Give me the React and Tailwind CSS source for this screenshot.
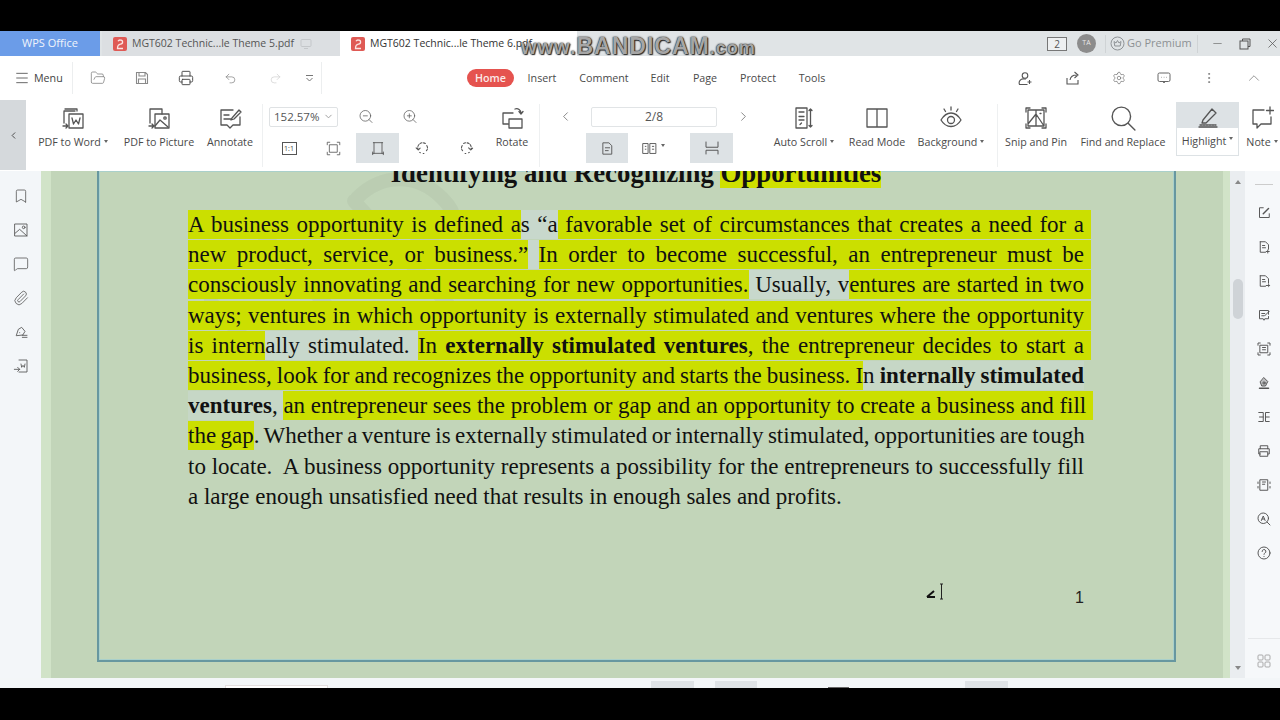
import React from "react";
import {
  Menu, FolderOpen, Undo2, Redo2, ZoomIn, ZoomOut, ChevronLeft, ChevronRight, ChevronDown, ChevronUp,
  Bookmark, MessageSquare, Paperclip, Settings, EllipsisVertical, Minus, X, Printer,
} from "lucide-react";

const sans = "font-['Open_Sans','Liberation_Sans',sans-serif]";

// small wrapper for the hand drawn toolbar icons
function Ico({ size = 24, box = 24, sw = 1.3, className = "text-[#555]", children }) {
  return (
    <svg width={size} height={size} viewBox={`0 0 ${box} ${box}`} fill="none" stroke="currentColor" strokeWidth={sw} strokeLinecap="round" strokeLinejoin="round" className={className}>
      {children}
    </svg>
  );
}

function Caret() {
  return <span className="ml-[3px] inline-block h-0 w-0 -translate-y-[3px] border-x-[2.5px] border-t-[3px] border-x-transparent border-t-[#666]" />;
}

function PdfBadge() {
  return (
    <svg width="14" height="14" viewBox="0 0 14 14" fill="none" className="mr-[5px] shrink-0">
      <rect width="14" height="14" rx="2" fill="#df5a55" />
      <path d="M5 4.200a2.300 2.300 0 0 1 2.300-1.200c3 0 3 3.800.2 4.200C5 7.600 4.500 10 4.500 11.500H10" stroke="#fbe4e2" strokeWidth="1.300" />
    </svg>
  );
}

function BigBtn({ className, icon, label, caret }) {
  return (
    <div className={`flex shrink-0 flex-col items-center pt-[6px] ${className}`}>
      <div className="flex h-[24px] items-center justify-center">{icon}</div>
      <div className="mt-[4px] whitespace-nowrap text-[10.7px] leading-[16px] text-[#4a4a4a]">
        {label}
        {caret && <Caret />}
      </div>
    </div>
  );
}

const tabs = [
  ["Insert", "w-[56px]"],
  ["Comment", "w-[68px]"],
  ["Edit", "w-[44px]"],
  ["Page", "w-[46px]"],
  ["Protect", "w-[60px]"],
  ["Tools", "w-[48px]"],
];

// h = highlighted, e = highlighted to the line end, s = grey selection tint, t = faint tint
const lines = [
  { segs: [["A business opportunity is defined a", "h"], ["s “a", "s"], [" favorable set of circumstances that creates a need for a", "e"]] },
  { segs: [["new product, service, or business.”", "h"], [" ", "s"], ["In order to become successful, an entrepreneur must be", "e"]] },
  { segs: [["consciously innovating and searching for new opportunities.", "h"], [" Usually, v", "s"], ["entures are started in two", "e"]] },
  { segs: [["ways; ventures in which opportunity is externally stimulated and ventures where the opportunity", "e"]] },
  { segs: [["is intern", "h"], ["ally stimulated. ", "s"], ["In ", "h"], ["externally stimulated ventures", "h", "b"], [", the entrepreneur decides to start a", "e"]] },
  { tight: "[word-spacing:-0.8px]", segs: [["business, look for and recognizes the opportunity and starts the business. I", "h"], ["n ", "t"], ["internally stimulated", "t", "b"]] },
  { segs: [["ventures", "t", "b"], [", ", "t"], ["an entrepreneur sees the problem or gap and an opportunity to create a business and fill", "e"]] },
  { tight: "[word-spacing:-1.3px]", segs: [["the gap", "h"], [". Whether a venture is externally stimulated or internally stimulated, opportunities are tough", null]] },
  { segs: [["to locate.  A business opportunity represents a possibility for the entrepreneurs to successfully fill", null]] },
];

function Run({ seg }) {
  const [text, kind, bold] = seg;
  let cls = "";
  if (kind === "h") cls = "bg-[#cbdf00] py-[2px]";
  if (kind === "e") cls = "bg-[#cbdf00] py-[2px] pr-[7px] -mr-[7px]";
  if (kind === "s") cls = "bg-[#c8d8cc] py-[2px]";
  if (kind === "t") cls = "bg-[#c6d7c6] py-[2px]";
  if (bold) cls += " font-bold";
  return <span className={cls}>{text}</span>;
}

const rightIcons = [
  <><path d="M11 5H6v13h13v-5" /><path d="M11 13l7-7" strokeWidth="2" /></>,
  <><path d="M7 5h7l4 4v6M7 5v14h7M10 10h3M10 13h4M17 16v4M15 18h4" /></>,
  <><path d="M7 5h7l4 4v6M7 5v14h7M10 10h3M10 13h4M15 18h4M18 16.500l1.500 1.500-1.500 1.500" /></>,
  <><path d="M18 11V6H6v11h5l1 2 1-2h5v-3M9 10h4M9 13h3M13 13l6-6" /></>,
  <><path d="M7 7h10v10H7zM10 10h4M10 13h4M4 7V4h3M17 4h3v3M20 17v3h-3M7 20H4v-3" /></>,
  <><path d="M12 5l5 5-3 6H9l-2-5z" fill="currentColor" fillOpacity=".35" /><circle cx="12" cy="12" r="1.500" /><path d="M6 19h12" strokeWidth="2" /></>,
  <><path d="M5 6h6v12H5M11 12H6M19 6h-5v12h5M14 12h5" /></>,
  <><path d="M7 9V5h10v4M7 16H5V9h14v7h-2M7 13h10v6H7z" /></>,
  <><path d="M7 5h10v14H7zM10 8h4M10 11h3M4 8v2M4 14v2M20 8v2M20 14v2" /></>,
  <><circle cx="11" cy="11" r="7" /><path d="M8.500 14l2.500-6 2.500 6M9.500 12h3M16 16l4 4" /></>,
  <><circle cx="12" cy="12" r="8" /><path d="M9.500 10a2.500 2.500 0 1 1 3.500 2.200c-.7.4-1 .8-1 1.600M12 16.500v.2" /></>,
];

export default function App() {
  return (
    <div className={`flex h-[720px] w-[1280px] flex-col overflow-hidden bg-black ${sans} relative`}>
      <div className="h-[31px] shrink-0" />

      {/* title bar */}
      <div className="flex h-[25px] shrink-0 items-center bg-[#e0e4e6] text-[10.5px]">
        <div className="flex h-full w-[100px] items-center justify-center bg-[#6b9ce8] text-[11px] text-[#f0f4fb]">WPS Office</div>
        <div className="ml-[2px] flex h-full w-[238px] items-center bg-[#dcdfe2] pl-[11px] text-[#555]">
          <PdfBadge />
          MGT602 Technic...le Theme 5.pdf
          <svg width="12" height="12" viewBox="0 0 12 12" fill="none" stroke="#c4c7ca" className="ml-[6px]"><rect x="1" y="1.500" width="10" height="7" rx="1" /><path d="M4 10.500h4" /></svg>
        </div>
        <div className="flex h-full w-[237px] items-center bg-white pl-[11px] text-[#333]">
          <PdfBadge />
          MGT602 Technic...le Theme 6.pdf
        </div>
        <div className="ml-auto flex h-full items-center">
          <div className="relative flex h-[14px] w-[20px] items-center justify-center border border-[#777] bg-[#eef0f1] text-[10px] leading-none text-[#555]">2</div>
          <div className="ml-[10px] flex h-[19px] w-[19px] items-center justify-center rounded-full bg-[#8c8c8c] text-[7px] text-[#e8e8e8]">TA</div>
          <div className="ml-[9px] h-[18px] w-px bg-[#cfd3d5]" />
          <svg width="15" height="15" viewBox="0 0 15 15" fill="none" stroke="#8f9396" className="ml-[4px]"><circle cx="7.500" cy="7.500" r="6.500" /><path d="M4 5.500l2 1.500 1.500-2.500L9 7l2-1.500-.8 4.500H4.800z" /></svg>
          <span className="w-[72px] pl-[2px] text-[11px] text-[#8d9194]">Go Premium</span>
          <div className="h-[18px] w-px bg-[#cfd3d5]" />
          <Minus size={13} strokeWidth={1.2} className="ml-[13px] text-[#666]" />
          <svg width="12" height="12" viewBox="0 0 12 12" fill="none" stroke="#555" className="ml-[15px]"><rect x="1" y="3" width="8" height="8" /><path d="M3.500 3V1H11v7.500H9" /></svg>
          <X size={15} strokeWidth={1.2} className="ml-[14px] text-[#555]" />
        </div>
      </div>

      {/* menu row */}
      <div className="flex h-[44px] shrink-0 items-center bg-white text-[#444]">
        <Menu size={16} strokeWidth={1.2} className="ml-[14px] text-[#444]" />
        <span className="ml-[4px] w-[30px] text-[10.7px]">Menu</span>
        <div className="ml-[8px] h-[32px] w-px bg-[#eceeef]" />
        <div className="ml-[17px] flex w-[16px] justify-center"><FolderOpen size={16} strokeWidth={1.1} className="text-[#777]" /></div>
        <svg width="14" height="14" viewBox="0 0 14 14" fill="none" stroke="#8a8a8a" strokeWidth="1.100" className="ml-[29px]"><path d="M1.500 1.500h9l2 2v9h-11zM4 1.500v3.500h6V1.500M3.500 12.500V8h7v4.500" /></svg>
        <Printer size={16} strokeWidth={1.4} className="ml-[29px] text-[#444]" />
        <Undo2 size={13} strokeWidth={1.2} className="ml-[30px] text-[#777]" />
        <Redo2 size={13} strokeWidth={1.2} className="ml-[32px] text-[#ccc]" />
        <svg width="9" height="9" viewBox="0 0 9 9" fill="none" stroke="#777" className="ml-[23px]"><path d="M1 1.500h7M1.500 4l3 3 3-3" /></svg>
        <div className="ml-[7px] h-[32px] w-px bg-[#eceeef]" />
        <div className="ml-[145px] flex h-[18px] w-[47px] items-center justify-center rounded-full bg-[#e5534f] text-[10.7px] font-semibold text-[#fbe9e8]">Home</div>
        {tabs.map(([t, w]) => (
          <div key={t} className={`${w} shrink-0 text-center text-[10.7px] text-[#4a4a4a]`}>{t}</div>
        ))}
        <div className="ml-auto flex items-center text-[#666]">
          <svg width="15" height="15" viewBox="0 0 15 15" fill="none" stroke="#555" strokeWidth="1.100"><circle cx="7" cy="4.500" r="2.800" /><path d="M8 8H6a4 4 0 0 0-4.500 5.500h8M11.500 9v4M9.500 11h4" /></svg>
          <svg width="16" height="16" viewBox="0 0 16 16" fill="none" stroke="#555" strokeWidth="1.100" className="ml-[32px]"><path d="M2 8v6h11v-4M5 10c.5-3 3-5 6.500-5M9.500 2l3.500 3-3.500 3" /></svg>
          <Settings size={14} strokeWidth={1.1} className="ml-[31px] text-[#666]" />
          <svg width="14" height="14" viewBox="0 0 14 14" fill="none" stroke="#666" className="ml-[31px]"><rect x="1" y="2" width="12" height="8.500" rx="1.500" /><path d="M6 10.500l1 1.500 1-1.500M4.500 6.300h.5M6.800 6.300h.5M9 6.300h.5" /></svg>
          <EllipsisVertical size={14} strokeWidth={1.4} className="ml-[31px] text-[#777]" />
          <ChevronUp size={18} strokeWidth={1} className="ml-[29px] mr-[17px] text-[#777]" />
        </div>
      </div>

      {/* ribbon */}
      <div className="flex h-[71px] shrink-0 bg-white">
        <div className="flex h-[70px] w-[26px] shrink-0 items-center justify-center bg-[#d5d9dc]"><ChevronLeft size={11} strokeWidth={2} className="text-[#444]" /></div>
        <BigBtn className="w-[94px]" label="PDF to Word" caret icon={
          <Ico><path d="M3 17V5h11M4 3h12v2" /><rect x="8" y="8" width="14" height="14" /><path d="M11 12l1.500 6 2.500-4 2.500 4 1.500-6M2 20h5M5 18l2 2-2 2" /></Ico>} />
        <BigBtn className="w-[78px]" label="PDF to Picture" icon={
          <Ico><path d="M3 17V3h12v5" /><rect x="8" y="8" width="14" height="14" /><circle cx="18" cy="12" r="1.200" /><path d="M8 20l5-6 8 7M2 20h5M5 18l2 2-2 2" /></Ico>} />
        <BigBtn className="w-[64px]" label="Annotate" icon={
          <Ico><path d="M15 4H3v15h6l3 3 3-3h7V11M6 9h5M6 13h7M14 12l7-8 2 2-7 7-3 1z" /></Ico>} />
        <div className="my-[4px] w-px shrink-0 bg-[#eef0f1]" />

        {/* zoom and rotate group */}
        <div className="flex w-[224px] shrink-0 flex-col">
          <div className="flex h-[33px] items-center pl-[6px]">
            <div className="flex h-[20px] w-[69px] items-center justify-between rounded-[2px] border border-[#dfe2e4] pl-[4px] pr-[3px] text-[11.5px] text-[#555]">
              152.57%<ChevronDown size={11} className="text-[#999]" />
            </div>
            <div className="ml-[20px] flex w-[16px] justify-center"><ZoomOut size={17} strokeWidth={1.1} className="text-[#555]" /></div>
            <div className="ml-[28px] flex w-[16px] justify-center"><ZoomIn size={17} strokeWidth={1.1} className="text-[#555]" /></div>
          </div>
          <div className="flex h-[30px] items-center pl-[4px]">
            <div className="flex w-[44px] justify-center"><div className="flex h-[13px] w-[15px] items-center justify-center border border-[#555] text-[7px] leading-none text-[#444]">1:1</div></div>
            <div className="flex w-[45px] justify-center"><Ico size={15}><path d="M6 6h12v12H6zM2 6V2h4M18 2h4v4M22 18v4h-4M6 22H2v-4" /></Ico></div>
            <div className="flex h-[30px] w-[43px] items-center justify-center bg-[#dde2e5]"><Ico size={16}><path d="M5 4h14M6 4v16M18 4v16M4 20h16M4 18v4M20 18v4" /></Ico></div>
            <div className="flex w-[46px] justify-center"><Ico size={17} sw={1.5}><path d="M6 14a7 7 0 0 1 10-9M18 8c1.500 2 1.500 5-.5 7M14 19h-1M9 18l-1-.5M3 11l3 3 3-3" strokeDasharray="3 2" /></Ico></div>
            <div className="flex w-[42px] justify-center"><Ico size={17} sw={1.5}><path d="M8 5a7 7 0 0 1 10 9M6 8c-1.500 2-1.500 5 .5 7M10 19h1M15 18l1-.5M15 11l3 3 3-3" strokeDasharray="3 2" /></Ico></div>
          </div>
        </div>
        <BigBtn className="w-[50px]" label="Rotate" icon={
          <Ico><path d="M3 18V7h10M3 18h5M9 22V13h13v9zM15 3c3-1 6 1 6 4M19 5.500L21 8l2-2.500" /></Ico>} />
        <div className="my-[4px] ml-[2px] w-px shrink-0 bg-[#eef0f1]" />

        {/* page navigation */}
        <div className="flex w-[227px] shrink-0 flex-col">
          <div className="flex h-[33px] items-center">
            <div className="ml-[17px] flex w-[16px] justify-center"><ChevronLeft size={15} strokeWidth={1.1} className="text-[#555]" /></div>
            <div className="ml-[18px] flex h-[20px] w-[126px] items-center justify-center rounded-[2px] border border-[#e1e4e6] text-[12px] text-[#555]">2/8</div>
            <div className="ml-[18px] flex w-[16px] justify-center"><ChevronRight size={15} strokeWidth={1.1} className="text-[#555]" /></div>
          </div>
          <div className="flex h-[30px] items-center pl-[46px]">
            <div className="flex h-[30px] w-[42px] items-center justify-center bg-[#dde2e5]"><Ico size={17}><path d="M6 4h8l4 4v12H6zM9 11h6M9 15h4" /></Ico></div>
            <div className="flex w-[50px] items-center justify-center"><Ico size={17}><path d="M3 5h7v14H3zM13 5h8v14h-8zM6 9h1M6 13h1M16 9h2M16 13h2" /></Ico><Caret /></div>
            <div className="ml-[12px] flex h-[30px] w-[43px] items-center justify-center bg-[#dde2e5]"><Ico size={18}><path d="M4 4v7h16V4M4 20v-5h16v5" /></Ico></div>
          </div>
        </div>

        <BigBtn className="w-[74px]" label="Auto Scroll" caret icon={
          <Ico><path d="M4 2h11v20H4zM7 6h5M7 10.500h5M7 14h5M9.500 17l-1.500 1.500M18.500 3v18M17 4.500L18.500 3 20 4.500M17 19.500l1.500 1.500 1.500-1.500" /></Ico>} />
        <BigBtn className="w-[72px]" label="Read Mode" icon={
          <Ico><path d="M2 3h10v18H2zM12 3h10v18H12z" /></Ico>} />
        <BigBtn className="w-[76px]" label="Background" caret icon={
          <Ico><path d="M2 14c3-5 6.500-7 10-7s7 2 10 7c-3 5-6.500 6.500-10 6.500S5 19 2 14z" /><circle cx="12" cy="14" r="3.500" /><path d="M5 3l1.500 2.500M12 1v3M19 3l-1.500 2.500" /></Ico>} />
        <div className="my-[4px] ml-[8px] w-px shrink-0 bg-[#eef0f1]" />
        <BigBtn className="ml-[2px] w-[72px]" label="Snip and Pin" icon={
          <Ico><path d="M4 4h16v16H4zM4 18l8-10 8 12M16 7.500h1M2 6V2h4M18 2h4v4M22 18v4h-4M6 22H2v-4M12 4v16" /></Ico>} />
        <BigBtn className="w-[102px]" label="Find and Replace" icon={
          <Ico size={26}><circle cx="10.500" cy="10.500" r="8.500" /><path d="M17 17l6 6" /></Ico>} />
        <div className="relative ml-[2px] mt-[2px] h-[54px] w-[63px] shrink-0 bg-[#dde2e5]">
          <div className="flex h-[26px] items-center justify-center pt-[4px]">
            <Ico><path d="M7 15l9-11 4 4-10 10H6zM3 22h18" /><path d="M4 20h16" strokeDasharray="2 1" /></Ico>
          </div>
          <div className="mx-[1px] flex h-[27px] items-center justify-center bg-white text-[10.7px] text-[#4a4a4a]">Highlight<Caret /></div>
        </div>
        <BigBtn className="ml-[5px] w-[36px]" label="Note" caret icon={
          <Ico><path d="M14 4H3v14h4v4l4-4h10v-7M20 1v7M16.500 4.500h7" /></Ico>} />
      </div>

      {/* document area */}
      <div className="relative flex h-[507px] shrink-0 overflow-hidden">
        <div className="flex w-[41px] shrink-0 flex-col items-center gap-[18px] bg-[#f3f6f9] pt-[17px] text-[#555]">
          <Bookmark size={16} strokeWidth={1.2} />
          <Ico size={16}><path d="M3 3h18v18H3zM3 17l7-6 11 10" /><circle cx="16" cy="8" r="2" /></Ico>
          <MessageSquare size={16} strokeWidth={1.2} />
          <Paperclip size={16} strokeWidth={1.2} />
          <Ico size={16}><path d="M5 17l3-9 5-3 5 6-3 5zM10 13h.1M14 20h7M14 17h7" /></Ico>
          <Ico size={16}><path d="M9 3h12v18H9M12 9l1 5 2-3 2 3 1-5M2 17h8M7 14l3 3-3 3" /></Ico>
        </div>
        <div className="w-[10px] shrink-0 bg-[#d1e3c8]" />

        <div className="relative flex-1 overflow-hidden bg-[#c2d5b9] pl-[46px]">
          <div className="relative h-[491px] w-[1079px] border-2 border-t-0 border-[#6797a0] text-[#111] shadow-[inset_0_0_0_1px_#a9d0cb]">
            {/* faint watermark */}
            <svg width="320" height="230" viewBox="0 0 320 230" fill="none" stroke="#000" strokeOpacity=".035" strokeWidth="14" strokeLinecap="round" className="absolute left-[105px] top-0">
              <path d="M3 127l72 78M60 65l90 100M150 30l100 110M153 27c25-25 60-25 85 0s5 35-25 40" />
            </svg>
            <div className="relative flex flex-col pl-[89px] pr-[90px] font-['Liberation_Serif',serif] text-[23px]">
              <div className="-mt-[14px] h-[53px] text-center text-[26.8px] font-bold leading-[32px]">
                Identifying and Recognizing <span className="bg-[#cfe000]">Opportunities</span>
              </div>
              {lines.map((line, i) => (
                <div key={i} className={`h-[30.2px] whitespace-pre leading-[30.2px] [text-align-last:justify] ${line.tight || ""}`}>
                  {line.segs.map((s, j) => <Run key={j} seg={s} />)}
                </div>
              ))}
              <div className="h-[30.2px] whitespace-pre leading-[30.2px]">a large enough unsatisfied need that results in enough sales and profits.</div>
              <div className="mt-[74px] text-right font-['Liberation_Sans',sans-serif] text-[16px] leading-[24px] text-[#222]">1</div>
            </div>
            {/* mouse cursor with the pen tip */}
            <svg width="20" height="20" viewBox="0 0 20 20" fill="none" className="absolute left-[827px] top-[411px]">
              <path d="M1 15l7-6M1 15h8" stroke="#111" strokeWidth="2" />
              <path d="M14 2h3M15.500 2v15M14 17h3" stroke="#222" strokeWidth="1" />
            </svg>
          </div>
        </div>

        <div className="w-[7px] shrink-0 bg-[#d1e3c8]" />
        <div className="relative flex w-[15px] shrink-0 flex-col items-center bg-[#eaedf0]">
          <div className="mt-[9px] h-0 w-0 border-x-[3px] border-b-[4px] border-x-transparent border-b-[#888]" />
          <div className="mt-[95px] h-[40px] w-[10px] rounded-full bg-[#cfd3d7]" />
          <div className="mt-auto mb-[8px] h-0 w-0 border-x-[3px] border-t-[4px] border-x-transparent border-t-[#888]" />
        </div>
        <div className="flex w-[35px] shrink-0 flex-col items-center bg-[#f6f8fa] pl-[3px] text-[#555]">
          <div className="mt-[13px] h-px w-[18px] bg-[#ccc]" />
          <div className="mt-[19px] flex flex-col items-center gap-[16px]">
            {rightIcons.map((p, i) => <Ico key={i} size={18}>{p}</Ico>)}
          </div>
          <div className="mt-auto w-full border-t border-[#e6e8ea] pb-[10px] pt-[15px]">
            <svg width="14" height="14" viewBox="0 0 14 14" fill="none" stroke="#aaa" className="mx-auto"><rect x="1" y="1" width="5" height="5" rx="1" /><rect x="8" y="1" width="5" height="5" rx="1" /><rect x="1" y="8" width="5" height="5" rx="1" /><rect x="8" y="8" width="5" height="5" rx="1" /></svg>
          </div>
        </div>
      </div>

      {/* status bar, mostly cut off by the black letterbox */}
      <div className="flex h-[10px] shrink-0 items-end overflow-hidden bg-[#f3f6f8]">
        <div className="ml-[225px] h-[3px] w-[103px] border border-b-0 border-[#e3dede] bg-white" />
        <div className="ml-[323px] h-[7px] w-[43px] bg-[#dfe3e6]" />
        <div className="ml-[21px] h-[7px] w-[42px] bg-[#dfe3e6]" />
        <div className="ml-[71px] h-[1px] w-[21px] bg-[#666]" />
        <div className="ml-[116px] h-[7px] w-[43px] bg-[#dfe3e6]" />
      </div>

      {/* screen recorder watermark */}
      <div className="absolute left-[521px] top-[33px] whitespace-nowrap font-['Liberation_Sans',sans-serif] font-bold leading-[26px] tracking-[1px] text-[#a6a6a6] [text-shadow:0_0_1px_#222,0_0_2px_#222,1px_1px_1px_#333]">
        <span className="text-[20px]">www.</span><span className="text-[23px]">BANDICAM</span><span className="text-[18px]">.com</span>
      </div>
    </div>
  );
}
